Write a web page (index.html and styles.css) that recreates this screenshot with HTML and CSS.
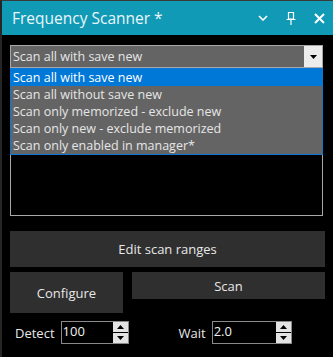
FILE: index.html
```html
<!DOCTYPE html>
<html lang="en">
<head>
  <meta charset="UTF-8">
  <title>Frequency Scanner</title>
  <link rel="stylesheet" href="styles.css">
</head>
<body>
  <div class="window">
    <div class="titlebar">
      <div class="title">Frequency Scanner *</div>
      <div class="title-icons">
        <!-- collapse -->
        <svg width="10" height="6" viewBox="0 0 10 6"><path d="M1 1 L5 5 L9 1" fill="none" stroke="#fff" stroke-width="1.6"/></svg>
        <!-- pin -->
        <svg width="10" height="13" viewBox="0 0 10 13"><path d="M2.5 0.5 H7.5 V7 H2.5 Z M0.5 7.5 H9.5 M5 7.5 V13" fill="none" stroke="#fff" stroke-width="1.2"/></svg>
        <!-- close -->
        <svg width="11" height="11" viewBox="0 0 11 11"><path d="M1 1 L10 10 M10 1 L1 10" fill="none" stroke="#fff" stroke-width="2"/></svg>
      </div>
    </div>

    <div class="content">
      <div class="picker">
        <div class="combo">
          <span class="combo-text">Scan all with save new</span>
          <span class="combo-arrow"><svg width="7" height="4" viewBox="0 0 7 4"><path d="M0 0 H7 L3.5 4 Z" fill="#000"/></svg></span>
        </div>
        <div class="listbox"></div>
        <ul class="dropdown">
          <li class="selected">Scan all with save new</li>
          <li>Scan all without save new</li>
          <li>Scan only memorized - exclude new</li>
          <li>Scan only new - exclude memorized</li>
          <li>Scan only enabled in manager*</li>
        </ul>
      </div>

      <div class="btn btn-wide">Edit scan ranges</div>

      <div class="btn-row">
        <div class="btn btn-config">Configure</div>
        <div class="btn btn-scan">Scan</div>
      </div>

      <div class="fields">
        <label class="field field-detect">
          <span class="field-label">Detect</span>
          <span class="spin spin-detect">
            <span class="spin-value">100</span>
            <span class="spin-btns">
              <span class="spin-up"><svg width="7" height="4" viewBox="0 0 7 4"><path d="M0 4 H7 L3.5 0 Z" fill="#000"/></svg></span>
              <span class="spin-down"><svg width="7" height="4" viewBox="0 0 7 4"><path d="M0 0 H7 L3.5 4 Z" fill="#000"/></svg></span>
            </span>
          </span>
        </label>
        <label class="field field-wait">
          <span class="field-label">Wait</span>
          <span class="spin spin-wait">
            <span class="spin-value">2.0</span>
            <span class="spin-btns">
              <span class="spin-up"><svg width="7" height="4" viewBox="0 0 7 4"><path d="M0 4 H7 L3.5 0 Z" fill="#000"/></svg></span>
              <span class="spin-down"><svg width="7" height="4" viewBox="0 0 7 4"><path d="M0 0 H7 L3.5 4 Z" fill="#000"/></svg></span>
            </span>
          </span>
        </label>
      </div>
    </div>
  </div>
</body>
</html>
```

FILE: styles.css
```css
body {
  margin: 0;
  padding: 0;
  background: #000;
  font-family: "Open Sans", "Noto Sans", sans-serif;
}

.window {
  width: 333px;
  height: 357px;
  box-sizing: border-box;
  border-top: 1px solid #3a3a3a;
  border-left: 2px solid #262626;
  background: #000;
  overflow: hidden;
}

.titlebar {
  height: 34px;
  background: #119ab6;
  display: flex;
  align-items: center;
  justify-content: space-between;
  padding: 0 8px 0 10px;
}

.title {
  color: #eaf6f9;
  font-size: 15.5px;
}

.title-icons {
  display: flex;
  align-items: center;
  gap: 18px;
}

.title-icons svg {
  display: block;
}

.content {
  padding: 10px 0 0 8px;
}

.picker {
  position: relative;
  width: 313px;
}

.combo {
  height: 23px;
  box-sizing: border-box;
  border: 1px solid #a8a8a8;
  background: #646464;
  display: flex;
}

.combo-text {
  flex: 1;
  color: #e6e6e6;
  font-size: 12.5px;
  line-height: 21px;
  padding-left: 2px;
}

.combo-arrow {
  width: 18px;
  background: #ececec;
  display: flex;
  align-items: center;
  justify-content: center;
}

.listbox {
  height: 148px;
  box-sizing: border-box;
  border: 1px solid #a8a8a8;
  border-top: none;
}

.dropdown {
  position: absolute;
  left: 0;
  top: 23px;
  width: 313px;
  box-sizing: border-box;
  margin: 0;
  padding: 0;
  list-style: none;
  border: 1px solid #0a78d4;
  background: #646464;
}

.dropdown li {
  height: 17px;
  line-height: 17px;
  padding-left: 2px;
  color: #e6e6e6;
  font-size: 12.5px;
}

.dropdown li.selected {
  background: #0078d7;
  color: #fff;
}

.btn {
  background: #2f2f2f;
  color: #e8e8e8;
  font-size: 13px;
  display: flex;
  align-items: center;
  justify-content: center;
}

.btn-wide {
  width: 315px;
  height: 36px;
  margin-top: 15px;
}

.btn-row {
  display: flex;
  align-items: flex-start;
  gap: 9px;
  margin-top: 5px;
}

.btn-config {
  width: 113px;
  height: 41px;
}

.btn-scan {
  width: 193px;
  height: 27px;
}

.fields {
  display: flex;
  align-items: center;
  margin-top: 8px;
  padding-left: 5px;
}

.field {
  display: flex;
  align-items: center;
}

.field-label {
  color: #e8e8e8;
  font-size: 13px;
  margin-right: 6px;
}

.field-wait {
  margin-left: 50px;
}

.spin {
  display: flex;
  height: 23px;
  box-sizing: border-box;
  border: 1px solid #8a8a8a;
  background: #000;
}

.spin-detect {
  width: 68px;
}

.spin-wait {
  width: 80px;
}

.spin-value {
  flex: 1;
  color: #f0f0f0;
  font-size: 13px;
  line-height: 19px;
  padding-left: 1px;
}

.spin-btns {
  width: 15px;
  display: flex;
  flex-direction: column;
  gap: 1px;
  background: #000;
}

.spin-up,
.spin-down {
  flex: 1;
  background: #e4e4e4;
  display: flex;
  align-items: center;
  justify-content: center;
}
```
